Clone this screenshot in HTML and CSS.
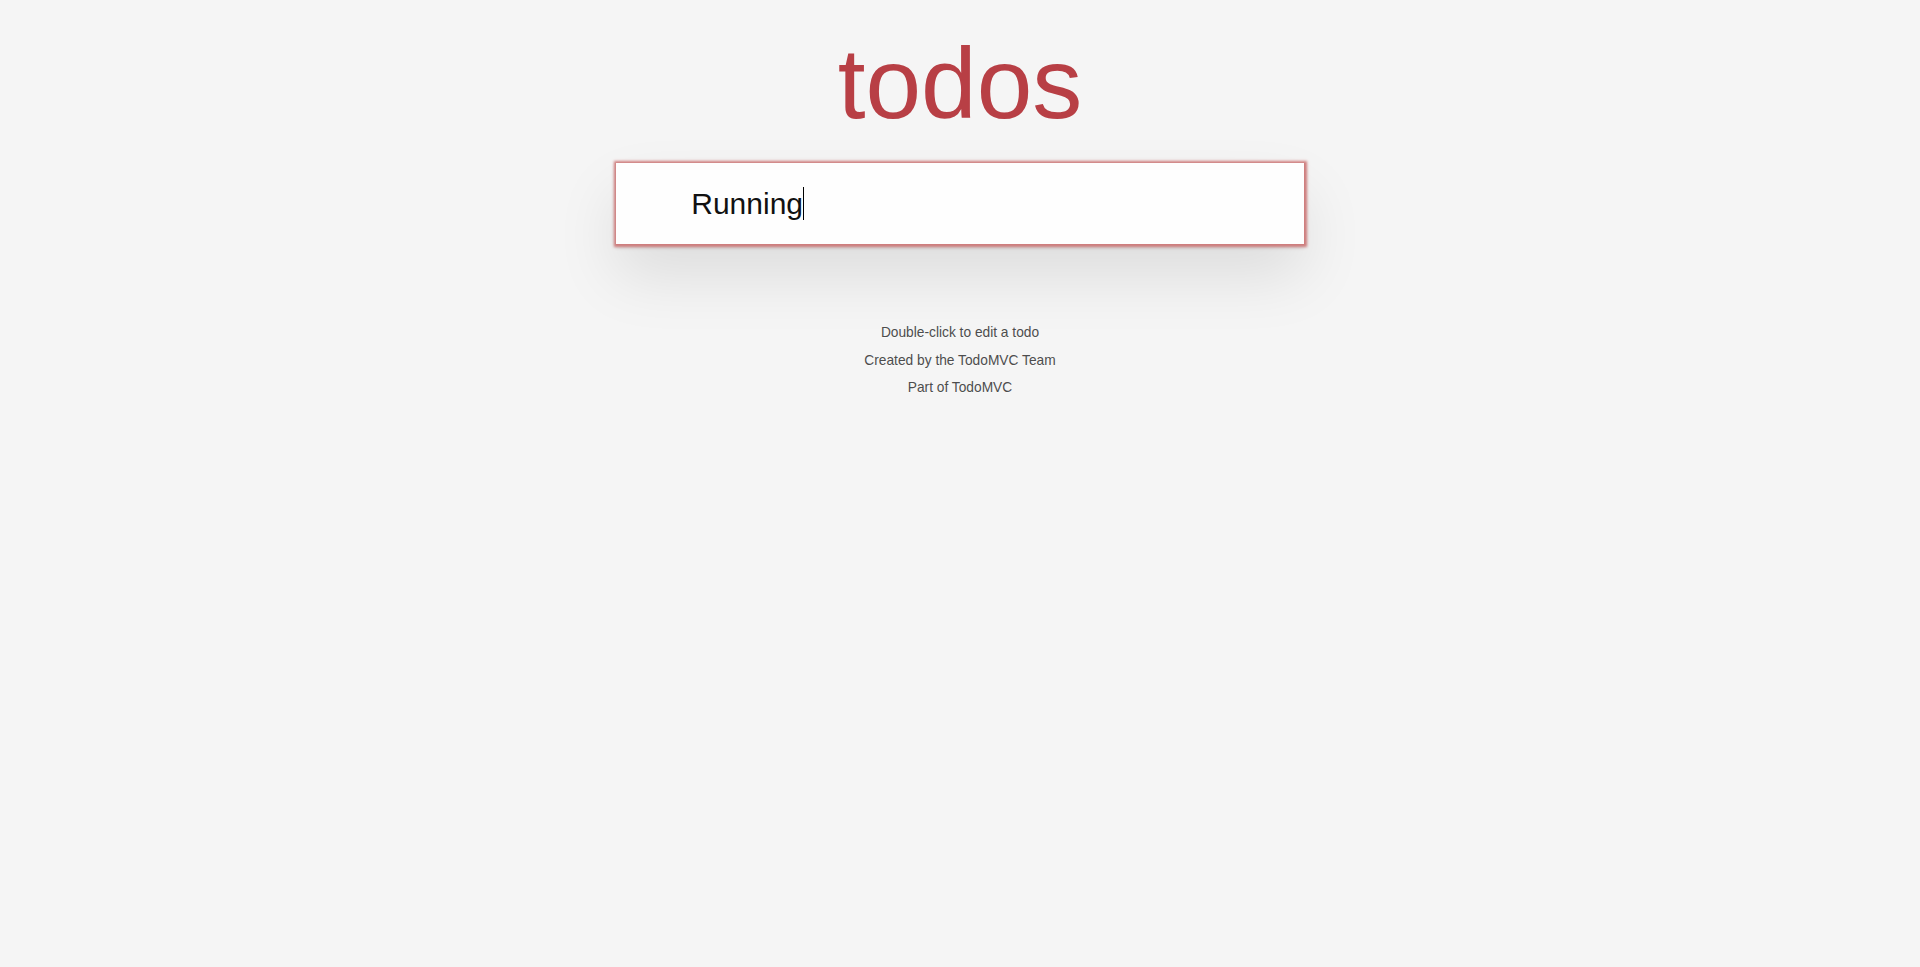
FILE: index.html
```html
<!DOCTYPE html>
<html lang="en">
<head>
<meta charset="utf-8">
<title>TodoMVC</title>
<link rel="stylesheet" href="styles.css">
</head>
<body>
<div class="page">
  <header class="header">
    <h1 class="title">todos</h1>
    <section class="todoapp">
      <div class="new-todo focused" role="textbox" aria-label="What needs to be done?"><span class="value">Running</span><span class="caret"></span></div>
    </section>
  </header>
  <footer class="info">
    <p>Double-click to edit a todo</p>
    <p>Created by the <a href="#">TodoMVC Team</a></p>
    <p>Part of <a href="#">TodoMVC</a></p>
  </footer>
</div>
</body>
</html>
```
FILE: styles.css
```css
html, body {
  margin: 0;
  padding: 0;
}
body {
  background: #f5f5f5;
  color: #111111;
  font-family: "Liberation Sans", Arial, Helvetica, sans-serif;
  font-size: 17.5px;
  line-height: 1.4em;
  font-weight: 300;
}
.page {
  max-width: 687.5px;
  margin: 0 auto;
  padding-top: 13.4px;
}
.header {
  display: flex;
  flex-direction: column;
}
.title {
  margin: 0;
  font-size: 100px;
  line-height: 140px;
  font-weight: 200;
  text-align: center;
  color: #b83f45;
  text-rendering: optimizeLegibility;
}
.todoapp {
  margin-top: 9.3px;
  background: #fff;
  box-shadow: 0 2.5px 5px 0 rgba(0, 0, 0, 0.2), 0 31.25px 62.5px 0 rgba(0, 0, 0, 0.1);
}
.new-todo {
  box-sizing: border-box;
  height: 81.25px;
  padding: 20px 20px 20px 75px;
  font-size: 30px;
  line-height: 42px;
  color: #111111;
  background: rgba(0, 0, 0, 0.003);
  white-space: nowrap;
}
.new-todo.focused {
  box-shadow: 0 0 2.5px 2.5px #cf7d7d;
}
.caret {
  display: inline-block;
  width: 1.25px;
  height: 33.5px;
  background: #000;
  vertical-align: -6.4px;
}
.info {
  margin: 82.25px auto 0;
  color: #4d4d4d;
  font-size: 13.75px;
  text-shadow: 0 1.25px 0 rgba(255, 255, 255, 0.5);
  text-align: center;
}
.info p {
  margin: 13.75px 0;
  line-height: 1;
}
.info a {
  color: inherit;
  text-decoration: none;
}
```
